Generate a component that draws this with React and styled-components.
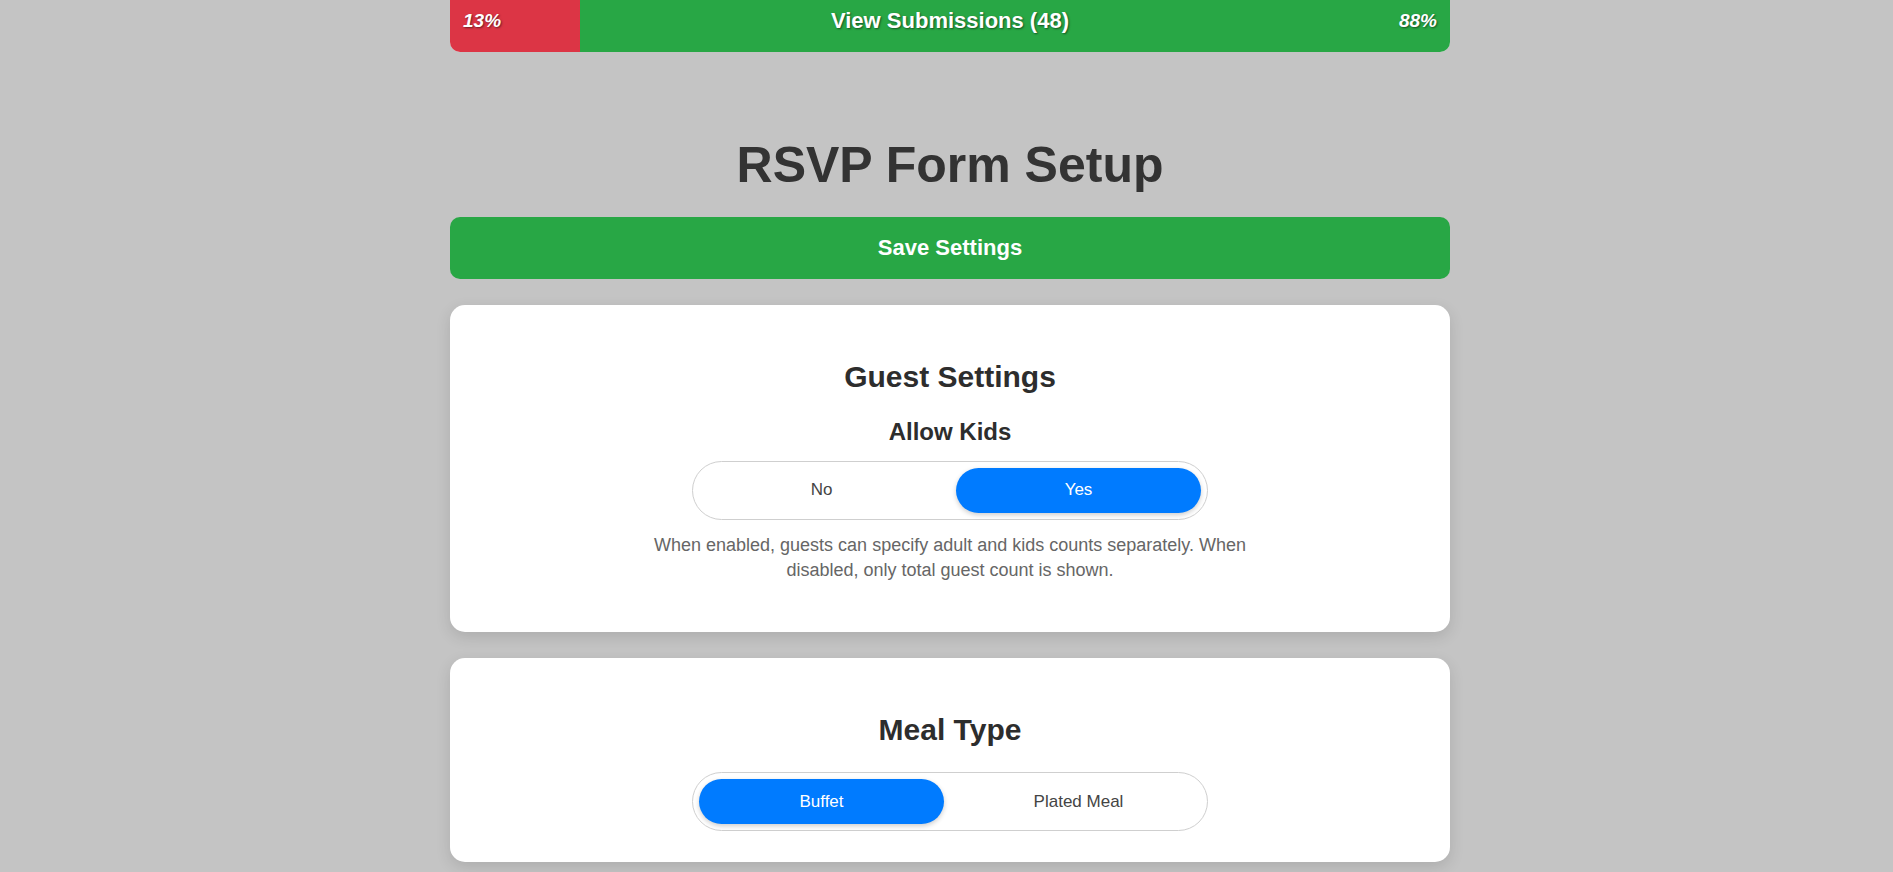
import React, { useState } from 'react';
import styled, { createGlobalStyle } from 'styled-components';

const GlobalStyle = createGlobalStyle`
  body {
    margin: 0;
    background-color: #c4c4c4;
    font-family: "Liberation Sans", Arial, sans-serif;
    color: #333;
  }
`;

const StyledPage = styled.div`
  display: flex;
  justify-content: center;
  padding-left: 7px;
  overflow: hidden;
  height: 872px;
`;

const StyledContainer = styled.div`
  width: 1000px;
  display: flex;
  flex-direction: column;
`;

const StatsBar = styled.button`
  position: relative;
  display: flex;
  width: 100%;
  height: 62px;
  margin-top: -10px;
  padding: 0;
  border: none;
  border-radius: 10px;
  overflow: hidden;
  cursor: pointer;
  font-family: inherit;
`;

const BarSegment = styled.div`
  height: 100%;
  background-color: ${({ color }) => color};
  flex: ${({ grow }) => (grow ? '1 1 auto' : '0 0 auto')};
`;

const BarOverlay = styled.div`
  position: absolute;
  inset: 0;
  display: flex;
  align-items: center;
  justify-content: space-between;
  padding: 0 13px;
  color: #fff;
  text-shadow: 1px 1px 2px rgba(0, 0, 0, 0.5);
`;

const Percent = styled.span`
  font-size: 19px;
  font-weight: bold;
  font-style: italic;
  width: 60px;
  text-align: ${({ align }) => align};
`;

const BarLabel = styled.span`
  font-size: 22px;
  font-weight: bold;
`;

const PageTitle = styled.h1`
  margin: 82px 0 21px;
  font-size: 50px;
  line-height: 62px;
  font-weight: bold;
  text-align: center;
  color: #333;
`;

const SaveButton = styled.button`
  width: 100%;
  height: 62px;
  border: none;
  border-radius: 10px;
  background-color: #28a745;
  color: #fff;
  font-family: inherit;
  font-size: 22px;
  font-weight: bold;
  cursor: pointer;
`;

const Card = styled.section`
  margin-top: 26px;
  padding: 54px 40px 31px;
  background-color: #fff;
  border-radius: 15px;
  box-shadow: 0 5px 15px rgba(0, 0, 0, 0.12);
  display: flex;
  flex-direction: column;
  align-items: center;
  & + & {
    margin-top: 26px;
  }
`;

const CardTitle = styled.h2`
  margin: 0 0 ${({ gap }) => gap || 23}px;
  font-size: 30px;
  line-height: 36px;
  font-weight: bold;
  color: #2d2d2d;
`;

const FieldLabel = styled.h3`
  margin: 0 0 14px;
  font-size: 24px;
  line-height: 28.8px;
  font-weight: bold;
  color: #2d2d2d;
`;

const ToggleGroup = styled.div`
  width: 502px;
  display: grid;
  grid-template-columns: 1fr 1fr;
  gap: 12px;
  padding: 6px;
  border: 1px solid #cfcfcf;
  border-radius: 40px;
  background-color: #fff;
`;

const ToggleOption = styled.button`
  height: 45px;
  border: none;
  border-radius: 30px;
  font-family: inherit;
  font-size: 17px;
  cursor: pointer;
  background-color: ${({ active }) => (active ? '#007bff' : 'transparent')};
  color: ${({ active }) => (active ? '#fff' : '#444')};
  box-shadow: ${({ active }) => (active ? '0 2px 5px rgba(0, 0, 0, 0.2)' : 'none')};
`;

const HelpText = styled.p`
  max-width: 600px;
  margin: 13px 0 18px;
  font-size: 18px;
  line-height: 1.4;
  text-align: center;
  color: #666;
`;

const Toggle = ({ options, value, onChange }) => (
  <ToggleGroup>
    {options.map((option) => (
      <ToggleOption
        key={option}
        active={option === value}
        onClick={() => onChange(option)}
      >
        {option}
      </ToggleOption>
    ))}
  </ToggleGroup>
);

const App = () => {
  const [allowKids, setAllowKids] = useState('Yes');
  const [mealType, setMealType] = useState('Buffet');
  const declined = 13;

  return (
    <>
      <GlobalStyle />
      <StyledPage>
        <StyledContainer>
          <StatsBar>
            <BarSegment color="#dc3545" style={{ width: `${declined}%` }} />
            <BarSegment color="#28a745" grow />
            <BarOverlay>
              <Percent align="left">13%</Percent>
              <BarLabel>View Submissions (48)</BarLabel>
              <Percent align="right">88%</Percent>
            </BarOverlay>
          </StatsBar>

          <PageTitle>RSVP Form Setup</PageTitle>
          <SaveButton>Save Settings</SaveButton>

          <Card>
            <CardTitle>Guest Settings</CardTitle>
            <FieldLabel>Allow Kids</FieldLabel>
            <Toggle options={['No', 'Yes']} value={allowKids} onChange={setAllowKids} />
            <HelpText>
              When enabled, guests can specify adult and kids counts separately. When
              disabled, only total guest count is shown.
            </HelpText>
          </Card>

          <Card>
            <CardTitle gap={24}>Meal Type</CardTitle>
            <Toggle
              options={['Buffet', 'Plated Meal']}
              value={mealType}
              onChange={setMealType}
            />
          </Card>
        </StyledContainer>
      </StyledPage>
    </>
  );
};

export default App;
